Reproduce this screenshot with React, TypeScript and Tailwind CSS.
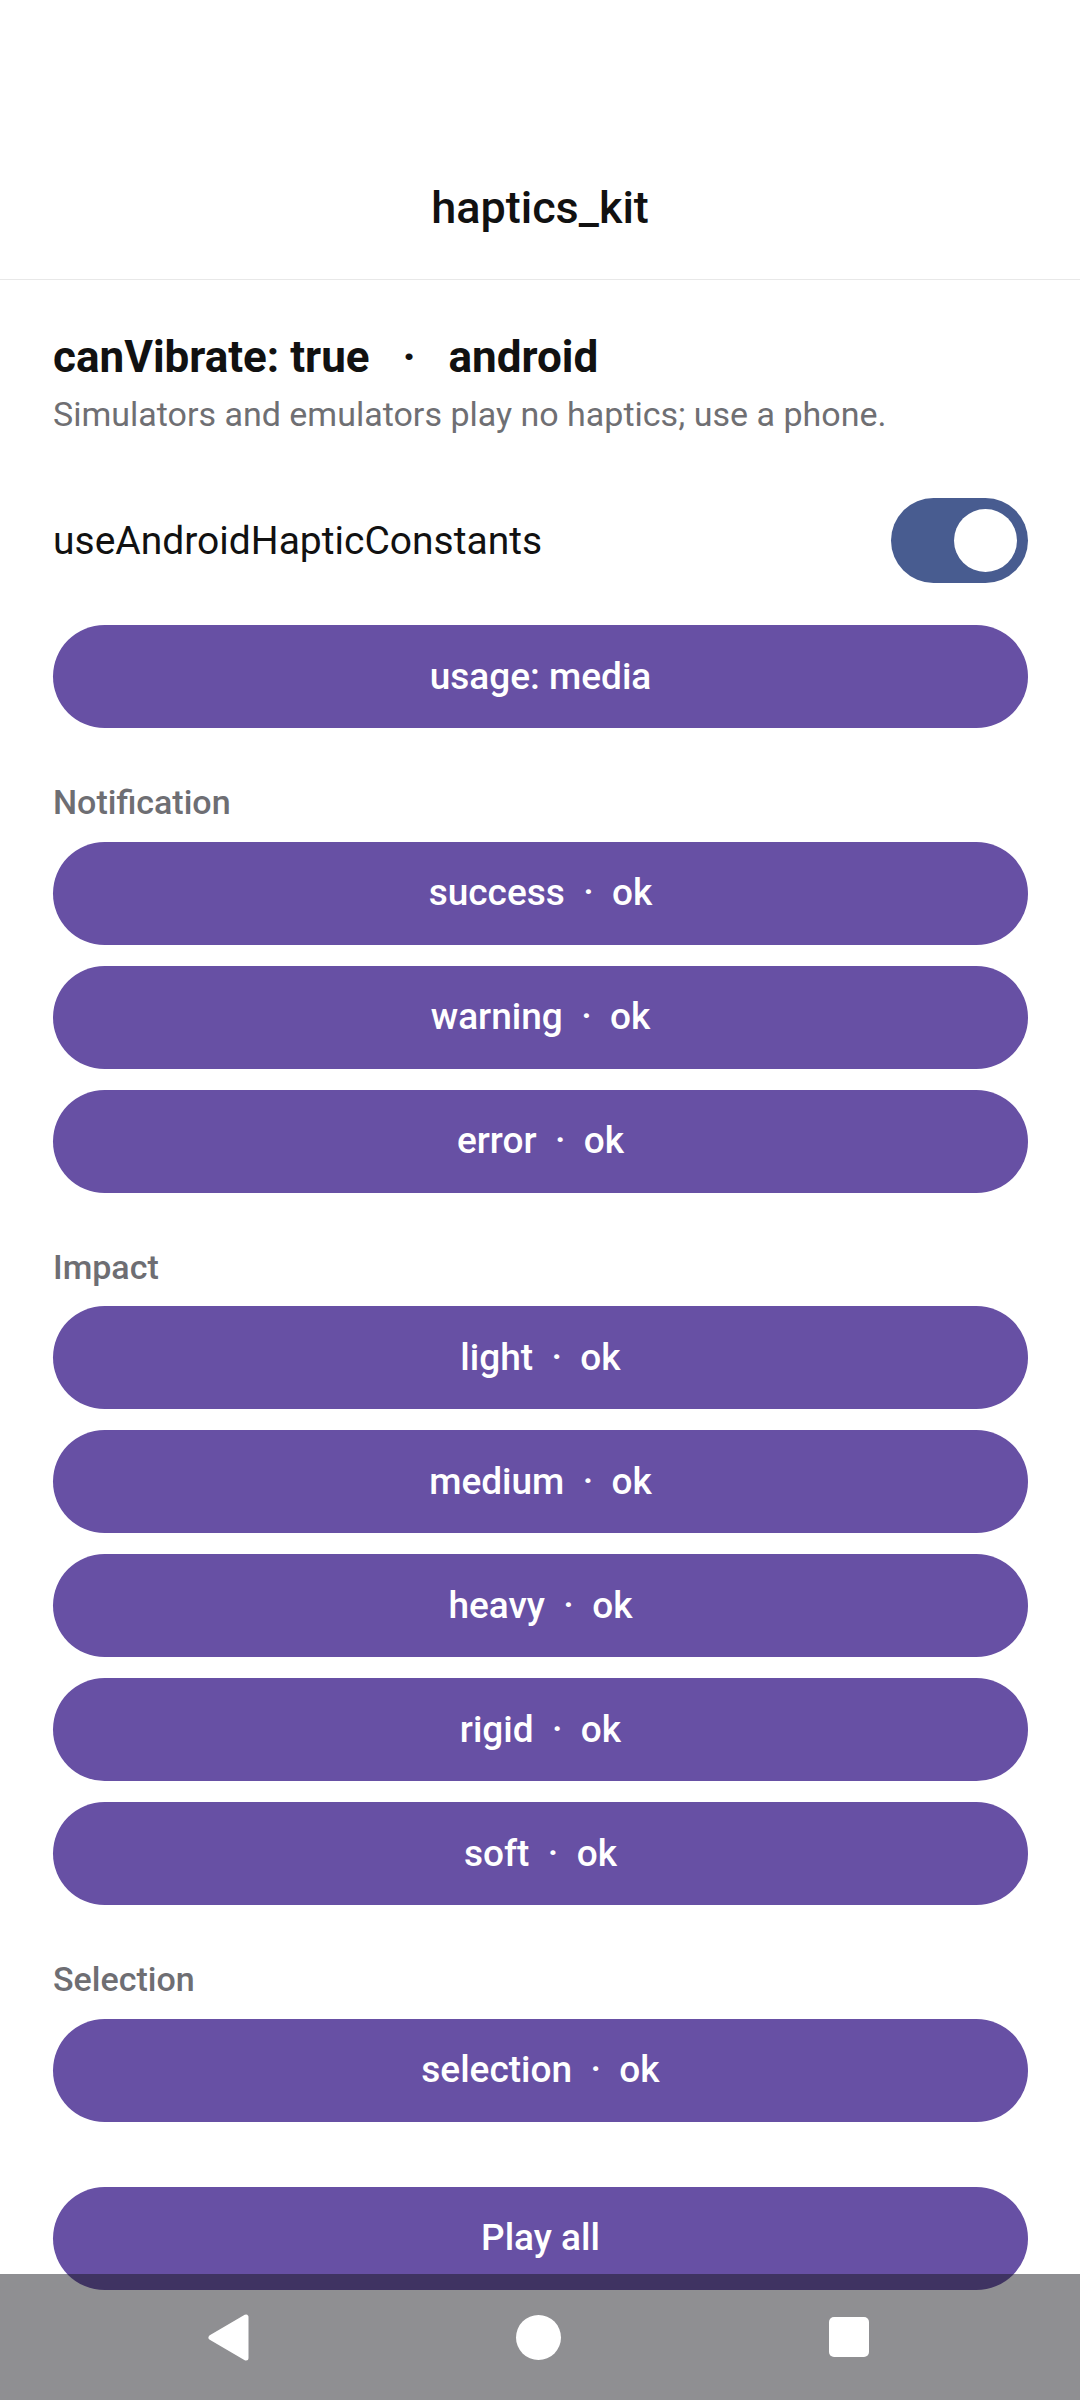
import React from "react";

const font = { fontFamily: "Roboto, 'Noto Sans', sans-serif" };

function Btn({ label, className = "" }: { label: string; className?: string }) {
  return (
    <div
      className={`flex h-[103px] w-full items-center justify-center rounded-full bg-[#6750a4] text-[37px] font-medium leading-[44px] text-white whitespace-pre ${className}`}
    >
      {label}
    </div>
  );
}

function Label({ text }: { text: string }) {
  return (
    <div className="mt-[54px] mb-[19.5px] h-[40px] text-[34px] font-medium leading-[40px] text-[#6e6e73]">
      {text}
    </div>
  );
}

export default function App() {
  return (
    <div className="relative h-[2400px] w-[1080px] overflow-hidden bg-white" style={font}>
      <div className="h-[280px] border-b border-[#e8e8e8] pt-[181px] text-center text-[45px] font-medium leading-[53px] text-[#111111]">
        haptics_kit
      </div>
      <div className="pl-[53px] pr-[52px]">
        <div className="mt-[52px] h-[51px] text-[44px] font-bold leading-[51px] text-[#111111] whitespace-pre">
          {"canVibrate: true   ·   android"}
        </div>
        <div className="mt-[11px] h-[40px] text-[34px] leading-[40px] text-[#6f6f73]">
          Simulators and emulators play no haptics; use a phone.
        </div>
        <div className="mt-[64px] flex h-[85px] items-center justify-between">
          <span className="text-[39px] leading-[46px] text-[#111111]">useAndroidHapticConstants</span>
          <div className="flex h-[85px] w-[137px] items-center justify-end rounded-full bg-[#485c90] pr-[11px]">
            <div className="h-[63px] w-[63px] rounded-full bg-white" />
          </div>
        </div>
        <div className="mt-[42px]">
          <Btn label="usage: media" />
        </div>
        <Label text="Notification" />
        <div className="flex flex-col gap-[21px]">
          <Btn label="success  ·  ok" />
          <Btn label="warning  ·  ok" />
          <Btn label="error  ·  ok" />
        </div>
        <Label text="Impact" />
        <div className="flex flex-col gap-[21px]">
          <Btn label="light  ·  ok" />
          <Btn label="medium  ·  ok" />
          <Btn label="heavy  ·  ok" />
          <Btn label="rigid  ·  ok" />
          <Btn label="soft  ·  ok" />
        </div>
        <Label text="Selection" />
        <Btn label="selection  ·  ok" />
        <div className="mt-[65px]">
          <Btn label="Play all" />
        </div>
      </div>
      <div className="absolute bottom-0 left-0 flex h-[126px] w-full items-center bg-[rgba(20,20,28,0.48)]">
        <div className="relative h-full w-full">
          <svg className="absolute left-[206px] top-[39px]" width="46" height="49" viewBox="0 0 46 49">
            <path d="M40 4 L40 45 L5 24.5 Z" fill="white" stroke="white" strokeWidth="5" strokeLinejoin="round" />
          </svg>
          <div className="absolute left-[516px] top-[41px] h-[45px] w-[45px] rounded-full bg-white" />
          <div className="absolute left-[829px] top-[43px] h-[40px] w-[40px] rounded-[5px] bg-white" />
        </div>
      </div>
    </div>
  );
}
